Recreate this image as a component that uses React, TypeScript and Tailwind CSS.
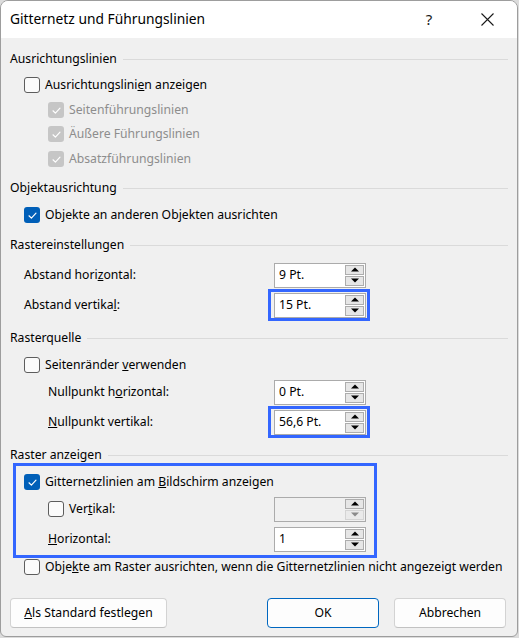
import type { ReactNode } from 'react'

const FONT = "font-['Noto_Sans','Liberation_Sans',sans-serif]"

function Tick({ color = 'white' }: { color?: string }) {
  return (
    <svg width="11" height="11" viewBox="0 0 11 11" fill="none">
      <path d="M2 5.8 L4.4 8.1 L9 3.2" stroke={color} strokeWidth="1.2" strokeLinecap="round" strokeLinejoin="round" />
    </svg>
  )
}

function Check({ checked, disabled }: { checked?: boolean; disabled?: boolean }) {
  if (disabled) {
    return (
      <span className="w-[16px] h-[16px] rounded-[3px] bg-[#c6c6c6] flex items-center justify-center shrink-0">
        <Tick />
      </span>
    )
  }
  if (checked) {
    return (
      <span className="w-[16px] h-[16px] rounded-[3px] bg-[#005fb8] flex items-center justify-center shrink-0">
        <Tick />
      </span>
    )
  }
  return <span className="w-[16px] h-[16px] rounded-[3px] border border-[#5d5d5d] bg-[#fbfbfb] shrink-0" />
}

function Arrow({ up, dim }: { up?: boolean; dim?: boolean }) {
  return (
    <svg width="8" height="5" viewBox="0 0 8 5">
      <path d={up ? 'M0 4.5 L4 0.5 L8 4.5 Z' : 'M0 0.5 L8 0.5 L4 4.5 Z'} fill={dim ? '#8a8a8a' : '#000'} />
    </svg>
  )
}

function Spin({ value, disabled }: { value?: string; disabled?: boolean }) {
  return (
    <div className={`w-[92px] h-[25px] shrink-0 border border-[#ababab] flex ${disabled ? 'bg-[#f0f0f0]' : 'bg-white'}`}>
      <div className="flex-1 pl-[4px] flex items-center text-[12.2px] text-black">{value}</div>
      <div className="w-[19px] flex flex-col gap-px py-px mr-px">
        <div className="flex-1 border border-[#adadad] bg-[#e6e6e6] flex items-center justify-center">
          <Arrow up />
        </div>
        <div className={`flex-1 border ${disabled ? 'border-[#d4d4d4] bg-[#eaeaea]' : 'border-[#adadad] bg-[#e6e6e6]'} flex items-center justify-center`}>
          <Arrow dim={disabled} />
        </div>
      </div>
    </div>
  )
}

function SpinCell({ value, disabled, highlight }: { value?: string; disabled?: boolean; highlight?: boolean }) {
  if (highlight) {
    return (
      <div className="w-[102px] h-[32px] shrink-0 border-[3px] border-[#3366ff] flex items-center pl-[3px]">
        <Spin value={value} disabled={disabled} />
      </div>
    )
  }
  return (
    <div className="w-[102px] shrink-0 flex items-center pl-[6px]">
      <Spin value={value} disabled={disabled} />
    </div>
  )
}

function Header({ children, className = '' }: { children: ReactNode; className?: string }) {
  return (
    <div className={`flex items-center h-[20px] shrink-0 ${className}`}>
      <span className="text-[12.2px] text-black whitespace-nowrap">{children}</span>
      <div className="flex-1 h-px bg-[#dadada] ml-[6px]" />
    </div>
  )
}

function CheckRow({
  children,
  checked,
  disabled,
  indent,
  className = '',
}: {
  children: ReactNode
  checked?: boolean
  disabled?: boolean
  indent: string
  className?: string
}) {
  return (
    <div className={`flex items-center h-[20px] shrink-0 gap-[5px] ${indent} ${className}`}>
      <Check checked={checked} disabled={disabled} />
      <span className={`text-[12.2px] whitespace-nowrap ${disabled ? 'text-[#8d8d8d]' : 'text-black'}`}>{children}</span>
    </div>
  )
}

function SpinRow({
  label,
  value,
  indent,
  highlight,
  className = '',
}: {
  label: ReactNode
  value: string
  indent: string
  highlight?: boolean
  className?: string
}) {
  return (
    <div className={`flex items-center shrink-0 ${highlight ? 'h-[32px]' : 'h-[26px]'} ${className}`}>
      <div className={`w-[258px] ${indent} text-[12.2px] text-black whitespace-nowrap`}>{label}</div>
      <SpinCell value={value} highlight={highlight} />
    </div>
  )
}

function Btn({ children, primary, className = '' }: { children: ReactNode; primary?: boolean; className?: string }) {
  return (
    <button
      className={`h-[30px] rounded-[4px] bg-[#fdfdfd] text-[12.2px] text-black flex items-center justify-center border ${
        primary ? 'border-[#0067c0]' : 'border-[#d3d3d3] border-b-[#c2c2c2]'
      } ${className}`}
    >
      {children}
    </button>
  )
}

export default function App() {
  return (
    <div className={`w-[519px] h-[638px] bg-[#dcdcdc] ${FONT}`}>
      <div className="w-[518px] h-[637px] rounded-t-[8px] rounded-b-[6px] border border-[#9d9d9d] overflow-hidden bg-[#f0f0f0] flex flex-col">
        {/* title bar */}
        <div className="h-[37px] bg-white flex items-center shrink-0">
          <span className="pl-[9px] text-[13.8px] text-black flex-1">Gitternetz und Führungslinien</span>
          <span className="w-[14px] text-[15px] text-[#1a1a1a] mr-[45px] text-center">?</span>
          <svg width="13" height="13" viewBox="0 0 13 13" className="mr-[23px]">
            <path d="M0.5 0.5 L12.5 12.5 M12.5 0.5 L0.5 12.5" stroke="#1a1a1a" strokeWidth="1.1" />
          </svg>
        </div>

        {/* body */}
        <div className="flex flex-col shrink-0 pl-[9px] pr-[9px]">
          <Header className="mt-[11px]">Ausrichtungslinien</Header>
          <CheckRow indent="pl-[14px]" className="mt-[6px]">
            Ausrichtungslini<u>e</u>n anzeigen
          </CheckRow>
          <CheckRow indent="pl-[38px]" disabled className="mt-[5px]">
            Seitenführungslinien
          </CheckRow>
          <CheckRow indent="pl-[38px]" disabled className="mt-[4px]">
            Äußere Führungslinien
          </CheckRow>
          <CheckRow indent="pl-[38px]" disabled className="mt-[5px]">
            Absatzführungslinien
          </CheckRow>

          <Header className="mt-[9px]">Objektausrichtung</Header>
          <CheckRow indent="pl-[14px]" checked className="mt-[7px]">
            Objekte an anderen Objekten ausrichten
          </CheckRow>

          <Header className="mt-[10px]">Rastereinstellungen</Header>
          <SpinRow
            className="mt-[7px]"
            indent="pl-[14px]"
            value="9 Pt."
            label={
              <>
                Abstand hori<u>z</u>ontal:
              </>
            }
          />
          <SpinRow
            className="mt-[1px]"
            indent="pl-[14px]"
            value="15 Pt."
            highlight
            label={
              <>
                Abstand vertika<u>l</u>:
              </>
            }
          />

          <Header className="mt-[7px]">Rasterquelle</Header>
          <CheckRow indent="pl-[14px]" className="mt-[7px]">
            Seitenränder <u>v</u>erwenden
          </CheckRow>
          <SpinRow
            className="mt-[4px]"
            indent="pl-[38px]"
            value="0 Pt."
            label={
              <>
                Nullpunkt h<u>o</u>rizontal:
              </>
            }
          />
          <SpinRow
            className="mt-[1px]"
            indent="pl-[38px]"
            value="56,6 Pt."
            highlight
            label={
              <>
                <u>N</u>ullpunkt vertikal:
              </>
            }
          />

          <div className="flex items-center h-[16px] shrink-0 mt-[9px]">
            <span className="text-[12.2px] text-black whitespace-nowrap">Raster anzeigen</span>
            <div className="flex-1 h-px bg-[#dadada] ml-[6px]" />
          </div>

          {/* highlighted group */}
          <div className="ml-[3px] w-[364px] h-[95px] shrink-0 border-[3px] border-[#3366ff] flex flex-col">
            <CheckRow indent="pl-[8px]" checked className="mt-[6px]">
              Gitternetzlinien am <u>B</u>ildschirm anzeigen
            </CheckRow>
            <div className="flex items-center h-[26px] shrink-0 mt-[4px]">
              <div className="w-[252px] pl-[32px] flex items-center gap-[5px]">
                <Check />
                <span className="text-[12.2px] text-black">
                  Ver<u>t</u>ikal:
                </span>
              </div>
              <SpinCell disabled />
            </div>
            <div className="flex items-center h-[26px] shrink-0 mt-[4px]">
              <div className="w-[252px] pl-[32px] text-[12.2px] text-black">
                <u>H</u>orizontal:
              </div>
              <SpinCell value="1" />
            </div>
          </div>

          <CheckRow indent="pl-[14px]" className="mt-[-1px]">
            Obje<u>k</u>te am Raster ausrichten, wenn die Gitternetzlinien nicht angezeigt werden
          </CheckRow>

          {/* buttons */}
          <div className="flex items-center shrink-0 mt-[21px] pr-[2px]">
            <Btn className="w-[157px]">
              <u>A</u>ls Standard festlegen
            </Btn>
            <div className="flex-1" />
            <Btn primary className="w-[112px]">
              OK
            </Btn>
            <Btn className="w-[112px] ml-[15px]">Abbrechen</Btn>
          </div>
        </div>
      </div>
    </div>
  )
}
